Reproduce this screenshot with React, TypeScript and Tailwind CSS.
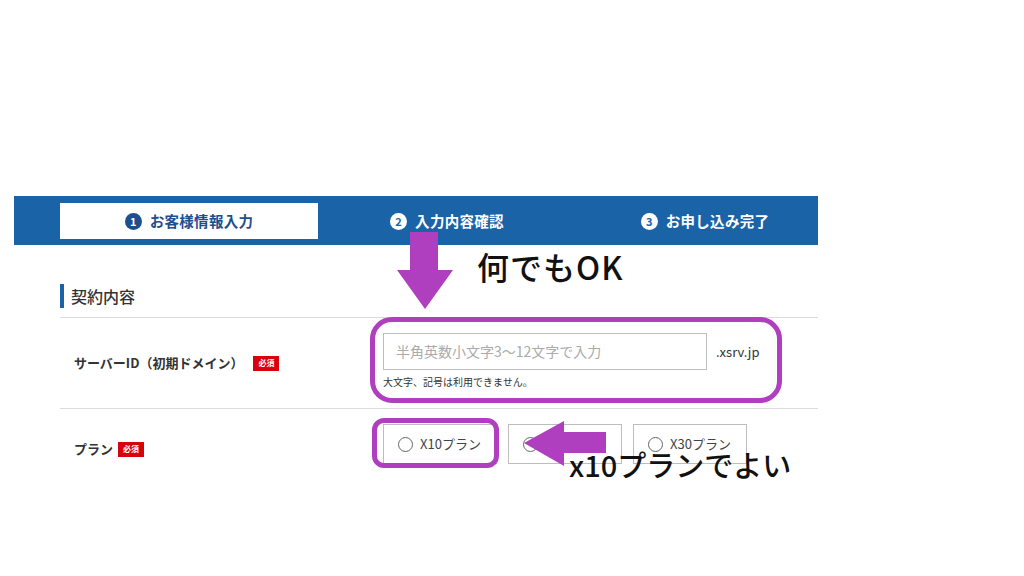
import React from "react";

const FONT = { fontFamily: '"Noto Sans CJK JP", "Noto Sans", sans-serif' };

function Step({ n, label, active }: { n: string; label: string; active?: boolean }) {
  return (
    <div
      className={
        "w-[258px] h-[36px] shrink-0 flex items-center justify-center gap-[8px] " +
        (active ? "bg-white" : "")
      }
    >
      <span
        className={
          "w-[17px] h-[17px] rounded-full flex items-center justify-center text-[11px] font-bold leading-none " +
          (active ? "bg-[#1d4f8e] text-white" : "bg-white text-[#1b63a7]")
        }
      >
        {n}
      </span>
      <span
        className={
          "text-[14.5px] font-bold tracking-[0.3px] " +
          (active ? "text-[#1d4f8e]" : "text-white")
        }
      >
        {label}
      </span>
    </div>
  );
}

function Badge() {
  return (
    <span className="inline-flex items-center justify-center w-[26px] h-[15px] bg-[#d8000c] text-white text-[8px] font-bold leading-none">
      必須
    </span>
  );
}

function Radio({ label }: { label: string }) {
  return (
    <div className="w-[114px] h-[40px] border border-[#bdbdbd] bg-white flex items-center pl-[14px] gap-[7px]">
      <span className="w-[15px] h-[15px] rounded-full border border-[#666]" />
      <span className="text-[13px] text-[#444]">{label}</span>
    </div>
  );
}

export default function App() {
  return (
    <div className="relative w-[1024px] h-[576px] bg-white overflow-hidden" style={FONT}>
      <div className="h-[196px]" />
      <div className="ml-[14px] w-[804px] h-[49px] bg-[#1b63a7] pl-[46px] pt-[7px] flex overflow-hidden">
        <Step n="1" label="お客様情報入力" active />
        <Step n="2" label="入力内容確認" />
        <Step n="3" label="お申し込み完了" />
      </div>

      <div className="ml-[60px] w-[758px]">
        <div className="mt-[39px] h-[24px] border-l-[4px] border-[#1b63a7] pl-[7px] flex items-center text-[16px] font-medium text-[#333]">
          契約内容
        </div>
        <div className="mt-[9px] border-t border-[#dcdcdc]" />
        <div className="h-[90px] flex">
          <div className="w-[323px] pl-[14px] flex items-center gap-[10px]">
            <span className="text-[13px] font-bold text-[#333]">サーバーID（初期ドメイン）</span>
            <Badge />
          </div>
          <div className="pt-[15px]">
            <div className="flex items-center">
              <div className="w-[324px] h-[37px] border border-[#bdbdbd] flex items-center px-[12px] text-[14px] text-[#aaa]">
                半角英数小文字3～12文字で入力
              </div>
              <span className="ml-[9px] text-[13px] text-[#333]">.xsrv.jp</span>
            </div>
            <div className="mt-[7px] text-[10px] text-[#333] leading-none">大文字、記号は利用できません。</div>
          </div>
        </div>
        <div className="border-t border-[#dcdcdc]" />
        <div className="h-[80px] flex">
          <div className="w-[323px] pl-[14px] flex items-center gap-[5px]">
            <span className="text-[13px] font-bold text-[#333]">プラン</span>
            <Badge />
          </div>
          <div className="pt-[15px] flex gap-[11px] items-start">
            <Radio label="X10プラン" />
            <Radio label="X20プラン" />
            <Radio label="X30プラン" />
          </div>
        </div>
      </div>

      {/* annotations */}
      <div className="absolute left-[370px] top-[317px] w-[412px] h-[86px] border-[5px] border-[#b03fbf] rounded-[22px]" />
      <div className="absolute left-[372px] top-[418px] w-[127px] h-[50px] border-[5px] border-[#b03fbf] rounded-[12px]" />

      <svg className="absolute left-[397px] top-[232px]" width="56" height="77" viewBox="0 0 56 77">
        <path d="M13 0 H41 V38 H56 L28 77 L0 38 H13 Z" fill="#b03fbf" />
      </svg>
      <svg className="absolute left-[524px] top-[421px]" width="82" height="45" viewBox="0 0 82 45">
        <path d="M0 22 L40 0 V11 H82 V32 H40 V45 Z" fill="#b03fbf" />
      </svg>

      <div className="absolute left-[477px] top-[250px] text-[32px] font-medium text-[#111] leading-none tracking-[1px]">
        何でもOK
      </div>
      <div className="absolute left-[569px] top-[450px] text-[29px] font-medium text-[#111] leading-none">
        x10プランでよい
      </div>
    </div>
  );
}
